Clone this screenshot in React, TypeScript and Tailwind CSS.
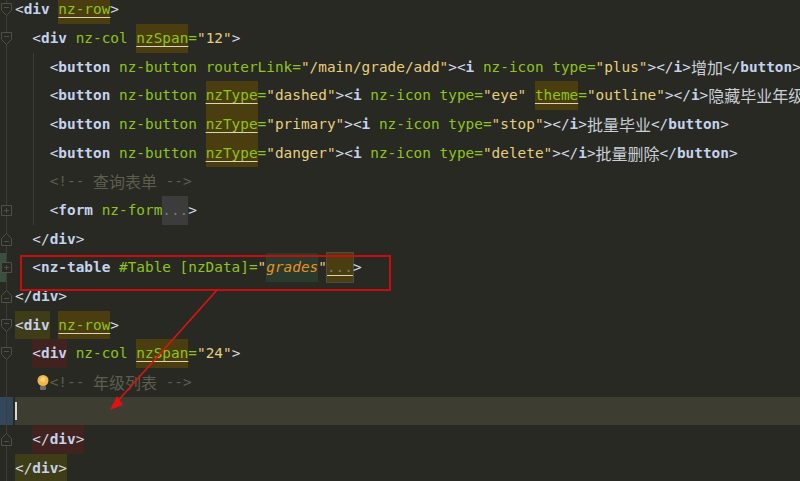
import React from 'react';

type Tok = { t: string; c: string };

const TAG = 'font-semibold text-[#c5d2ee]';
const BR = 'text-[#d5dbe6]';
const ATTR = 'text-[#8fc31f]';
const STR = 'text-[#e6cf7e]';
const EQ = 'text-[#8fc31f]';
const CJK = "font-['Noto_Sans_CJK_SC',sans-serif] text-[16px]";
const MARK = 'bg-[#4a3d10] underline decoration-[#d9d5b5] underline-offset-[3px]';

const tok = (t: string, c: string = ''): Tok => ({ t, c });

const btn = (attr: Tok[], rest: Tok[]): Tok[] => [
    tok('<', BR), tok('button', TAG), tok(' nz-button ', ATTR), ...attr, ...rest,
];

const icon = (type: string, extra: Tok[], label: string): Tok[] => [
    tok('>', BR), tok('<', BR), tok('i', TAG), tok(' nz-icon type=', ATTR), tok(`"${type}"`, STR), ...extra,
    tok('></', BR), tok('i', TAG), tok('>', BR), tok(label, `text-[#c9cdd6] ${CJK}`),
    tok('</', BR), tok('button', TAG), tok('>', BR),
];

const nzType = (v: string): Tok[] => [tok('nzType', `${ATTR} ${MARK}`), tok('=', EQ), tok(`"${v}"`, STR)];

const closeDiv = (c = ''): Tok[] => [tok('</', `${BR} ${c}`), tok('div', `${TAG} ${c}`), tok('>', `${BR} ${c}`)];

type Row = {
    indent: number;
    toks: Tok[];
    fold?: 'open' | 'close' | 'plus';
    guide?: boolean;
    side?: string;
    current?: boolean;
    bulb?: boolean;
};

const rows: Row[] = [
    { indent: 0, fold: 'open', toks: [tok('<', BR), tok('div', TAG), tok(' ', ''), tok('nz-row', `${ATTR} ${MARK}`), tok('>', BR)] },
    { indent: 1, fold: 'open', toks: [tok('<', BR), tok('div', TAG), tok(' nz-col ', ATTR), tok('nzSpan', `${ATTR} ${MARK}`), tok('=', EQ), tok('"12"', STR), tok('>', BR)] },
    { indent: 2, guide: true, toks: btn([tok('routerLink=', ATTR), tok('"/main/grade/add"', STR)], icon('plus', [], '增加')) },
    { indent: 2, guide: true, toks: btn(nzType('dashed'), icon('eye', [tok(' ', ''), tok('theme', `${ATTR} ${MARK}`), tok('=', EQ), tok('"outline"', STR)], '隐藏毕业年级')) },
    { indent: 2, guide: true, toks: btn(nzType('primary'), icon('stop', [], '批量毕业')) },
    { indent: 2, guide: true, toks: btn(nzType('danger'), icon('delete', [], '批量删除')) },
    { indent: 2, guide: true, toks: [tok('<!-- ', 'text-[#5d5d50]'), tok('查询表单', `text-[#5d5d50] ${CJK}`), tok(' -->', 'text-[#5d5d50]')] },
    { indent: 2, guide: true, fold: 'plus', toks: [tok('<', BR), tok('form', TAG), tok(' nz-form', ATTR), tok('...', 'bg-[#3c3c3c] text-[#77776f]'), tok('>', BR)] },
    { indent: 1, fold: 'close', toks: closeDiv() },
    { indent: 1, fold: 'plus', side: 'bg-[#39503f]', toks: [tok('<', BR), tok('nz-table', TAG), tok(' #Table [nzData]=', ATTR), tok('"', STR), tok('grades', 'bg-[#2a3a2c] italic text-[#ea8f24]'), tok('"', STR), tok('...', 'bg-[#4a3d10] text-[#77776f] underline decoration-[#d9d5b5] underline-offset-[3px] outline outline-[#4b4b4b]'), tok('>', BR)] },
    { indent: 0, fold: 'close', toks: closeDiv() },
    { indent: 0, fold: 'open', toks: [tok('<', `${BR} bg-[#3f3d18]`), tok('div', `${TAG} bg-[#3f3d18]`), tok(' ', ''), tok('nz-row', `${ATTR} ${MARK}`), tok('>', BR)] },
    { indent: 1, fold: 'open', toks: [tok('<', `${BR} bg-[#40221f]`), tok('div', `${TAG} bg-[#40221f]`), tok(' nz-col ', ATTR), tok('nzSpan', `${ATTR} ${MARK}`), tok('=', EQ), tok('"24"', STR), tok('>', BR)] },
    { indent: 2, bulb: true, toks: [tok('<!-- ', 'text-[#5d5d50]'), tok('年级列表', `text-[#5d5d50] ${CJK}`), tok(' -->', 'text-[#5d5d50]')] },
    { indent: 0, current: true, side: 'bg-[#32485a]', toks: [] },
    { indent: 1, fold: 'close', toks: closeDiv('bg-[#40221f]') },
    { indent: 0, toks: closeDiv('bg-[#3f3d18]') },
];

const FoldIcon: React.FC<{ kind: 'open' | 'close' | 'plus' }> = ({ kind }) => (
    <svg width="13" height="15" viewBox="0 0 13 15" className="absolute left-[0px] top-[7px] text-[#4e4f48]" fill="#282923" stroke="currentColor">
        {kind === 'open' && <path d="M1.5 1.5h10v7l-5 5-5-5z" />}
        {kind === 'close' && <path d="M1.5 13.5h10v-7l-5-5-5 5z" />}
        {kind === 'plus' && <path d="M1.5 2.5h10v10h-10z" />}
        {kind !== 'plus' && <path d={kind === 'open' ? 'M4 5.5h5' : 'M4 9.5h5'} />}
        {kind === 'plus' && <path d="M4 7.5h5M6.5 5v5" />}
    </svg>
);

const Bulb: React.FC = () => (
    <svg width="14" height="18" viewBox="0 0 14 18" className="absolute left-[21px] top-[6px]">
        <circle cx="7" cy="6.5" r="5.5" fill="#f2b544" />
        <circle cx="7" cy="5.5" r="2.5" fill="#f7cf85" />
        <rect x="4" y="12" width="6" height="4" rx="1" fill="#6e6e68" />
    </svg>
);

const CodeRow: React.FC<{ row: Row }> = ({ row }) => (
    <div className={`flex h-[28.67px] shrink-0 leading-[28.67px] whitespace-pre ${row.current ? 'bg-[#3d3d32]' : ''}`}>
        <div className="relative w-[15px] shrink-0 bg-[#282923]">
            {row.side && <div className={`absolute inset-y-0 left-0 ${row.current ? 'w-[13px]' : 'w-[7px]'} ${row.side}`} />}
            <div className="absolute inset-y-0 left-[6px] w-px bg-[#3d3e38]" />
            {row.fold && <FoldIcon kind={row.fold} />}
        </div>
        <div className="relative flex h-full" style={{ paddingLeft: row.indent * 17.33 }}>
            {row.guide && <div className="absolute inset-y-0 left-[18px] w-px bg-[#3d3e38]" />}
            {row.bulb && <Bulb />}
            {row.current && <div className="my-[5px] w-[2px] bg-[#d8d8d0]" />}
            {row.toks.map((k, i) => (
                <span key={i} className={`h-full ${k.c}`}>{k.t}</span>
            ))}
        </div>
    </div>
);

const App: React.FC = () => {
    return (
        <div className="relative h-[481px] w-[800px] overflow-hidden bg-[#282923] font-['DejaVu_Sans_Mono','Noto_Sans_CJK_SC',monospace] text-[14.4px]">
            <div className="-mt-[4.67px] flex flex-col">
                {rows.map((r, i) => <CodeRow key={i} row={r} />)}
            </div>

            {/* annotation drawn on top of the screenshot */}
            <div className="absolute left-[20px] top-[255px] h-[36px] w-[371px] border-[2.5px] border-[#c80d0d]" />
            <svg width="800" height="481" className="absolute inset-0">
                <path d="M217 290L116 403" stroke="#e01212" strokeWidth="1.6" />
                <path d="M110 410L117 396L123 405Z" fill="#e01212" />
            </svg>
        </div>
    );
};

export default App;
